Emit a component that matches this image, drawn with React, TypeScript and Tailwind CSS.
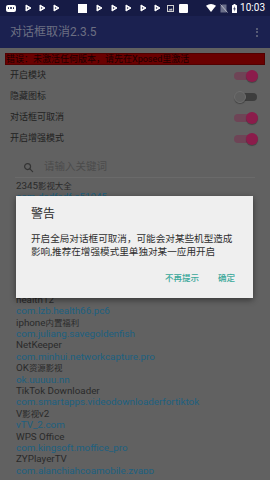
import React from "react";

const Tri = () => (
  <svg width="7" height="8" viewBox="0 0 7 8">
    <path d="M1 1 L6 4 L1 7 Z" fill="white" stroke="white" strokeWidth="1" strokeLinejoin="round" />
    <circle cx="2.6" cy="4" r="0.8" fill="#161b45" />
  </svg>
);

const SwitchOn = () => (
  <div className="relative w-[24px] h-[14px] flex items-center">
    <div className="w-[18px] h-[8px] rounded-full bg-[#6e4456]" />
    <div className="absolute right-0 top-[1px] w-[12px] h-[12px] rounded-full bg-[#8b1c4b] shadow-[0_1px_1px_rgba(0,0,0,0.3)]" />
  </div>
);

const SwitchOff = () => (
  <div className="relative w-[24px] h-[14px] flex items-center">
    <div className="ml-[5px] w-[18px] h-[8px] rounded-full bg-[#3d3d3d]" />
    <div className="absolute left-0 top-[1px] w-[12px] h-[12px] rounded-full bg-[#5e5e5e] border border-[#6e6e6e] shadow-[0_1px_1px_rgba(0,0,0,0.3)]" />
  </div>
);

const CJK = /[\u3000-\u303f\u4e00-\u9fff\uff00-\uffef]/;

const Mixed = ({ t }: { t: string }) => (
  <>
    {t.split(/([\u3000-\u303f\u4e00-\u9fff\uff00-\uffef]+)/).map((s, i) =>
      CJK.test(s) ? (
        <span key={i} className="text-[0.86em]">
          {s}
        </span>
      ) : (
        <React.Fragment key={i}>{s}</React.Fragment>
      )
    )}
  </>
);

// null = row hidden behind the dialog
const list: ([string, boolean] | null)[] = [
  ["2345影视大全", false],
  ["com.dsdfadf.a51045", true],
  null,
  null,
  null,
  null,
  null,
  null,
  null,
  null,
  ["health12", false],
  ["com.lzb.health66.pc6", true],
  ["iphone内置福利", false],
  ["com.juliang.savegoldenfish", true],
  ["NetKeeper", false],
  ["com.minhui.networkcapture.pro", true],
  ["OK资源影视", false],
  ["ok.uuuuu.nn", true],
  ["TikTok Downloader", false],
  ["com.smartapps.videodownloaderfortiktok", true],
  ["V影视v2", false],
  ["vTV_2.com", true],
  ["WPS Office", false],
  ["com.kingsoft.moffice_pro", true],
  ["ZYPlayerTV", false],
  ["com.alanchiahcoamobile.zyapp", true],
];

export default function App() {
  return (
    <div className="relative w-[270px] h-[480px] overflow-hidden bg-[#616161] font-['Roboto','Noto_Sans_CJK_SC',sans-serif]">
      {/* status bar */}
      <div className="h-[16px] bg-[#161b45] flex items-center pl-[6px] pr-[5px] text-white">
        <div className="flex items-center gap-[7px]">
          <div className="w-[10px] h-[7px] rounded-[2px] bg-white flex items-center justify-center gap-[1px]">
            <span className="w-[1.5px] h-[1.5px] bg-[#161b45] rounded-full" />
            <span className="w-[1.5px] h-[1.5px] bg-[#161b45] rounded-full" />
            <span className="w-[1.5px] h-[1.5px] bg-[#161b45] rounded-full" />
          </div>
          <div className="ml-[2px] flex gap-[7px]">
            <Tri />
            <Tri />
            <Tri />
          </div>
        </div>
        <div className="ml-[18px] w-[9px] h-[9px] bg-white" />
        <div className="ml-[9px] flex gap-[7.5px]">
          <Tri />
          <Tri />
          <Tri />
          <Tri />
          <Tri />
        </div>
        <svg className="ml-[6px]" width="7" height="7" viewBox="0 0 7 7">
          <rect x="0.5" y="0.5" width="6" height="6" fill="none" stroke="#cfcfcf" strokeWidth="1" />
          <path d="M1.5 5.5 L3 3.5 L4 4.5 L5 3 L5.5 5.5 Z" fill="#cfcfcf" />
        </svg>
        <div className="ml-[5px] w-[9px] h-[9px] rounded-[1px] bg-white" />
        <div className="flex-1" />
        <svg width="10" height="8" viewBox="0 0 10 8">
          <path d="M0 1.8 Q5 -1.6 10 1.8 L5 8 Z" fill="white" />
        </svg>
        <svg className="ml-[4px]" width="8" height="9" viewBox="0 0 8 9">
          <path d="M2 0.5 H6.5 V8.5 H0.5 V2 Z" fill="#6a6f8a" />
          <path d="M0.5 0.5 L7.5 8.5" stroke="#d0d0d8" strokeWidth="0.8" />
        </svg>
        <svg className="ml-[4px]" width="5" height="9" viewBox="0 0 5 9">
          <rect x="1.5" y="0" width="2" height="1" fill="white" />
          <rect x="0" y="1" width="5" height="8" rx="0.5" fill="white" />
          <path d="M3 2 L1.2 5.2 H2.5 L2 7.8 L3.8 4.4 H2.6 Z" fill="#161b45" />
        </svg>
        <span className="ml-[3px] text-[10px] leading-none">10:03</span>
      </div>

      {/* app bar */}
      <div className="h-[32px] bg-[#1b2150] flex items-center justify-between pl-[10px] pr-[12px]">
        <span className="text-[12px] text-[#6c6f82] leading-none">对话框取消2.3.5</span>
        <div className="flex flex-col gap-[1.5px]">
          <span className="w-[2px] h-[2px] rounded-full bg-[#6c6f82]" />
          <span className="w-[2px] h-[2px] rounded-full bg-[#6c6f82]" />
          <span className="w-[2px] h-[2px] rounded-full bg-[#6c6f82]" />
        </div>
      </div>

      {/* banner */}
      <div className="mt-[5px] mx-[5px] h-[12px] bg-[#6a0000] border border-[#520000] flex items-center text-[9px] leading-none text-[#1c0000] whitespace-nowrap">
        错误：未激活任何版本，请先在Xposed里激活
      </div>

      {/* switches */}
      <div className="flex flex-col text-[9px] text-[#1f1f1f]">
        <div className="h-[21px] flex items-center justify-between pl-[10px] pr-[12px]">
          <span>开启模块</span>
          <SwitchOn />
        </div>
        <div className="h-[21px] flex items-center justify-between pl-[10px] pr-[12px]">
          <span>隐藏图标</span>
          <SwitchOff />
        </div>
        <div className="h-[21px] flex items-center justify-between pl-[10px] pr-[12px]">
          <span>对话框可取消</span>
          <SwitchOn />
        </div>
        <div className="h-[21px] flex items-center justify-between pl-[10px] pr-[12px]">
          <span>开启增强模式</span>
          <SwitchOn />
        </div>
      </div>

      {/* search */}
      <div className="mt-[8px] mx-[15px] h-[21px] flex items-center border-b border-[#6a6a6a] pl-[8px]">
        <svg width="11" height="11" viewBox="0 0 24 24" fill="none" stroke="#343434" strokeWidth="2.6" strokeLinecap="round">
          <circle cx="10" cy="10" r="6.5" />
          <path d="M15 15 L21 21" />
        </svg>
        <span className="ml-[10px] text-[10.5px] text-[#4b4b4b] leading-none">请输入关键词</span>
      </div>

      {/* list */}
      <div className="mt-[2px] h-[294px] overflow-hidden pl-[16px]">
        {list.map((row, i) =>
          row ? (
            <div
              key={i}
              className={
                "h-[11.4px] text-[9.8px] leading-[11.4px] whitespace-nowrap " +
                (row[1] ? "text-[#1c6080]" : "text-[#2a2a2a]")
              }
            >
              <Mixed t={row[0]} />
            </div>
          ) : (
            <div key={i} className="h-[11.4px]" />
          )
        )}
      </div>

      {/* dialog */}
      <div className="absolute left-[16px] top-[196px] w-[237px] h-[102px] bg-[#efefef] shadow-[0_2px_6px_rgba(0,0,0,0.45)] flex flex-col">
        <div className="pl-[15px] pt-[10px] text-[12px] leading-[16px] text-[#2a2a2a]">警告</div>
        <div className="pl-[15px] pr-[12px] mt-[10px] text-[9.6px] leading-[13px] text-[#2e2e2e]">
          开启全局对话框可取消，可能会对某些机型造成影响,推荐在增强模式里单独对某一应用开启
        </div>
        <div className="mt-[14px] flex justify-end pr-[18px] gap-[19px] text-[8.5px] leading-[12px] font-medium text-[#3aa89a]">
          <span>不再提示</span>
          <span>确定</span>
        </div>
      </div>
    </div>
  );
}
